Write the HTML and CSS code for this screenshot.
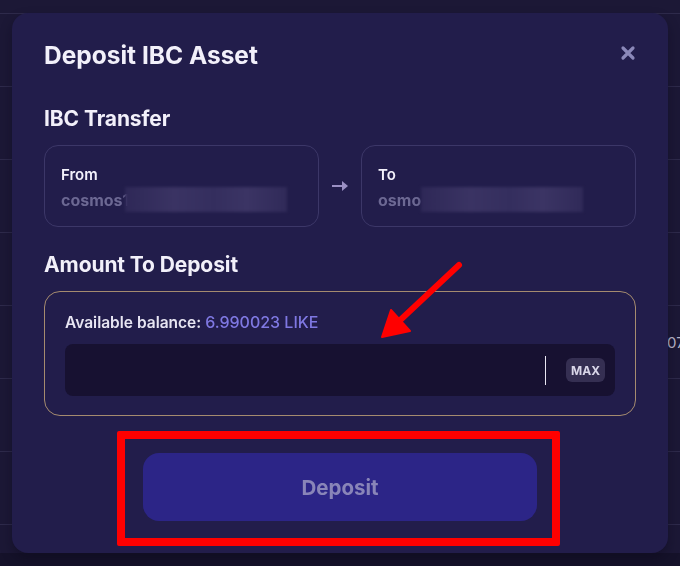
FILE: index.html
```html
<!DOCTYPE html>
<html>
<head>
<meta charset="utf-8">
<link rel="stylesheet" href="styles.css">
</head>
<body>
<div class="page">
  <div class="row"></div>
  <div class="row"></div>
  <div class="row"></div>
  <div class="row"></div>
  <div class="row"><span class="peek">07</span></div>
  <div class="row"></div>
  <div class="row"></div>
  <div class="row last"></div>
</div>

<div class="modal">
  <div class="modal-head">
    <h1 class="title">Deposit IBC Asset</h1>
    <svg class="close" width="16" height="16" viewBox="0 0 16 16"><path d="M3 3L13 13M13 3L3 13" stroke="#8b88b9" stroke-width="3.2" stroke-linecap="round"/></svg>
  </div>

  <h2 class="section first">IBC Transfer</h2>
  <div class="transfer">
    <div class="addr-box">
      <div class="addr-label">From</div>
      <div class="addr-value">cosmos1<span class="blur from"></span></div>
    </div>
    <svg class="arrow" width="18" height="12" viewBox="0 0 18 12"><path d="M1 6H13" stroke="#9b90c4" stroke-width="2"/><path d="M11 1L17 6L11 11Z" fill="#9b90c4"/></svg>
    <div class="addr-box">
      <div class="addr-label">To</div>
      <div class="addr-value">osmo<span class="blur"></span></div>
    </div>
  </div>

  <h2 class="section second">Amount To Deposit</h2>
  <div class="amount">
    <div class="balance">Available balance: <span class="bal-val">6.990023 LIKE</span></div>
    <div class="input">
      <span class="caret"></span>
      <span class="max">MAX</span>
    </div>
  </div>

  <div class="actions">
    <button class="deposit">Deposit</button>
  </div>
</div>

<div class="highlight"></div>
<svg class="pointer" width="680" height="566" viewBox="0 0 680 566">
  <path d="M459 265L395 325" stroke="#ff0000" stroke-width="6" stroke-linecap="round"/>
  <path d="M382 337L391 310L410 331Z" fill="#ff0000" stroke="#ff0000" stroke-width="2" stroke-linejoin="round"/>
</svg>
</body>
</html>
```

FILE: styles.css
```css
* { box-sizing: border-box; }
html, body { margin: 0; padding: 0; }
body {
  width: 680px;
  height: 566px;
  overflow: hidden;
  background: #15122a;
  font-family: Inter, "Liberation Sans", sans-serif;
}
.page {
  height: 553px;
  background: #1c1836;
  padding-top: 13px;
  overflow: hidden;
}
.row {
  height: 73px;
  border-top: 1px solid #2e2a4b;
  display: flex;
  align-items: center;
  white-space: nowrap;
}
.peek {
  padding-left: 667px;
  color: #b9b6ca;
  font-size: 15px;
}
.modal {
  position: fixed;
  left: 12px;
  top: 13px;
  width: 656px;
  height: 540px;
  background: #221d4b;
  border-radius: 16px;
  padding: 28px 32px 32px;
  display: flex;
  flex-direction: column;
  box-shadow: 0 6px 12px rgba(10, 8, 25, 0.4);
}
.modal-head {
  display: flex;
  justify-content: space-between;
  align-items: center;
  height: 28px;
}
.title {
  margin: 0;
  font-size: 24.5px;
  line-height: 28px;
  font-weight: 700;
  color: #f2f0fa;
  letter-spacing: 0;
}
.close { margin-top: -4px; }
.section {
  margin: 0;
  font-size: 21px;
  line-height: 24px;
  font-weight: 700;
  color: #f2f0fa;
  letter-spacing: -0.1px;
}
.section.first { margin: 38px 0 14px; }
.section.second { margin: 26px 0 14px; }
.transfer {
  display: flex;
  align-items: center;
  gap: 12px;
}
.addr-box {
  flex: 1;
  height: 82px;
  border: 1px solid #3c3768;
  border-radius: 14px;
  padding: 19px 16px 0;
}
.addr-label {
  font-size: 15px;
  line-height: 20px;
  font-weight: 600;
  color: #f3f1fb;
}
.addr-value {
  margin-top: 2px;
  font-size: 16px;
  line-height: 24px;
  font-weight: 700;
  color: #6c6893;
  display: flex;
  align-items: center;
}
.blur {
  display: inline-block;
  width: 162px;
  height: 25px;
  background: linear-gradient(90deg, #2e2857 0%, #3a3363 30%, #342e5e 55%, #3b3464 75%, #302a59 100%);
  filter: blur(1.5px);
}
.blur.from { margin-left: -4px; }
.arrow { flex: none; }
.amount {
  border: 1px solid #a58b6f;
  border-radius: 16px;
  padding: 20px 20px 19px;
}
.balance {
  font-size: 15.5px;
  line-height: 20px;
  font-weight: 600;
  color: #e7e5f2;
}
.bal-val {
  color: #7f78e2;
  font-weight: 500;
  font-size: 16px;
}
.input {
  margin-top: 11px;
  height: 52px;
  background: #171131;
  border-radius: 8px;
  display: flex;
  align-items: center;
  justify-content: flex-end;
  padding-right: 10px;
}
.caret {
  width: 1px;
  height: 29px;
  background: #e8e6f2;
  margin-right: 20px;
}
.max {
  width: 39px;
  height: 24px;
  border-radius: 6px;
  background: #352f52;
  color: #d9d6e8;
  font-size: 12px;
  font-weight: 700;
  display: flex;
  align-items: center;
  justify-content: center;
}
.actions {
  margin-top: 37px;
  display: flex;
  justify-content: center;
}
.deposit {
  width: 394px;
  height: 68px;
  border: none;
  border-radius: 16px;
  background: #2c2587;
  color: #8985b8;
  font-family: Inter, "Liberation Sans", sans-serif;
  font-size: 20.5px;
  font-weight: 700;
  letter-spacing: 0;
}
.highlight {
  position: fixed;
  left: 117px;
  top: 431px;
  width: 443px;
  height: 115px;
  border: 8px solid #ff0000;
  border-radius: 2px;
}
.pointer {
  position: fixed;
  left: 0;
  top: 0;
}
```
